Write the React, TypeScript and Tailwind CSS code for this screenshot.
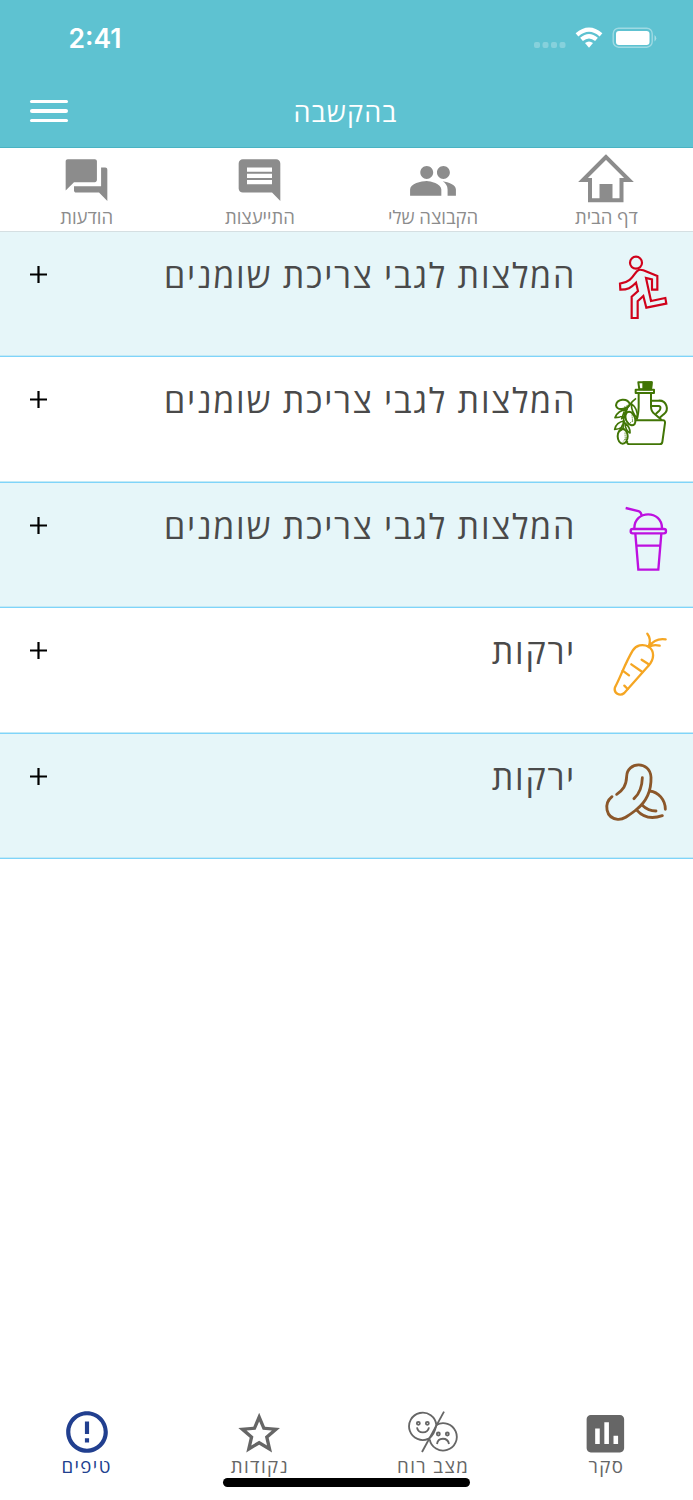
import React from "react";

const Runner = () => (
  <svg viewBox="30 30 210 210" className="w-[70px] h-[70px]" fill="none" stroke="#d0021b" strokeWidth="6.5">
    <circle cx="138" cy="68" r="18" />
    <path d="M146 90 C132 96 130 126 90 131 L91 149 C114 149 122 144 138 128 L144 153 L125 170 V234 H143 V184 L160 168 L169 203 L229 191 L226 174 L183 183 L168 114 L186 118 V149 H202 V108 L160 91 Q152 88 146 90Z" />
  </svg>
);

const OliveOil = () => (
  <svg viewBox="32 29 210 210" className="w-[70px] h-[70px]" fill="none" stroke="#417505" strokeWidth="6" strokeLinejoin="round">
    <path d="M147 51 H187 L185 72 H150Z" />
    <path d="M162 51 H187 L185 72 H162Z" fill="#417505" />
    <rect x="139" y="73" width="55" height="10" />
    <path d="M148 84 V126 Q147 150 142 163 M185 84 V124 Q185 138 196 146 L217 164" />
    <path d="M138 165 H221 Q228 165 227 173 L219 230 Q218 237 211 237 H119 Q111 235 114 227" />
    <path d="M187 106 H207 C232 104 241 134 223 147 L211 157 M187 122 H208 C216 123 214 132 209 137 L199 146" />
    <path d="M140 99 C108 124 101 154 101 192" strokeWidth="5" />
    <path d="M122 117 C114 96 82 100 80 120 C83 136 111 134 122 117Z" />
    <path d="M112 142 C126 132 144 156 136 176 C122 190 100 160 112 142Z" />
    <ellipse cx="100" cy="213" rx="15" ry="22" />
    <path d="M113 132 C95 133 83 142 77 157 C94 157 109 148 113 132Z M126 115 C141 126 145 142 144 158 C133 148 126 134 126 115Z M105 167 C89 169 79 178 76 192 C91 192 103 183 105 167Z M107 173 C117 181 123 191 122 203 C112 197 107 187 107 173Z M105 138 L97 160 L109 151 M100 178 L91 197 L105 188" strokeWidth="5" />
    <path d="M104 126 L116 119 M109 128 L119 121 M128 148 L130 172 M123 172 L132 164 M107 202 L108 226 M102 228 L111 217" strokeWidth="3" strokeDasharray="3 3" />
  </svg>
);

const Smoothie = () => (
  <svg viewBox="30 32 210 210" className="w-[70px] h-[70px]" fill="none" stroke="#bd10e0" strokeWidth="7">
    <path d="M107 53 L145 62 Q154 65 155 77 M133 115 C132 58 217 58 216 115" />
    <rect x="122" y="116" width="106" height="13" rx="6" />
    <path d="M136 130 L145 238 H205 L214 130 M139 166 H211" />
  </svg>
);

const Carrot = () => (
  <svg viewBox="30 33 210 210" className="w-[70px] h-[70px]" fill="none" stroke="#f5a623" strokeWidth="7" strokeLinecap="round">
    <path d="M176 95 C158 86 138 90 128 107 C105 145 91 188 75 217 C70 234 89 245 103 234 L174 154 C195 132 193 107 176 95Z" />
    <path d="M176 95 Q185 72 172 56 M176 95 Q196 68 227 73 M176 96 Q190 87 209 92 M155 134 L176 148 M124 148 L157 171 M98 167 L117 181 M103 212 L113 222" />
  </svg>
);

const Peanut = () => (
  <svg viewBox="30 34 210 210" className="w-[70px] h-[70px]" fill="none" stroke="#8b572a" strokeWidth="8.5" strokeLinecap="round">
    <path d="M66 168 C40 189 47 232 83 236 C101 238 121 221 139 207 C171 182 184 145 183 110 C181 60 111 62 110 107 C109 135 99 148 80 161" />
    <path d="M157 111 Q156 152 132 174 M179 151 C205 154 226 177 226 206 M156 193 Q174 211 198 211 M141 209 C162 233 187 235 217 225" />
  </svg>
);

const topTabs = [
  {
    label: "דף הבית",
    icon: (
      <svg viewBox="0 0 56 50" className="w-[56px] h-[50px]">
        <path d="M28 3 L5 26 H12 V46.200 H43.500 V26 H51 Z" fill="none" stroke="#8c8c8c" strokeWidth="4" />
        <path d="M21.500 30 H34.500 V47 H21.500Z" fill="#8c8c8c" />
      </svg>
    ),
  },
  {
    label: "הקבוצה שלי",
    icon: (
      <svg viewBox="0 0 24 24" className="w-[50px] h-[50px]" fill="#8c8c8c">
        <path d="M16.670 13.130C18.040 14.060 19 15.320 19 17v3h4v-3c0-2.180-3.570-3.470-6.330-3.870z" />
        <path d="M9 12c1.700 0 3.100-1.400 3.100-3.100S10.700 5.800 9 5.800 5.900 7.200 5.900 8.900 7.300 12 9 12zM17 12c1.700 0 3.100-1.400 3.100-3.100S18.700 5.800 17 5.800s-3.100 1.400-3.100 3.100S15.300 12 17 12zM9 13c-2.670 0-8 1.340-8 4v3h15v-3c0-2.660-5.330-4-7-4z" />
      </svg>
    ),
  },
  {
    label: "התייעצות",
    icon: (
      <svg viewBox="0 -0.5 24 24" className="w-[51px] h-[50px]" fill="#8c8c8c">
        <path d="M21.990 4c0-1.100-.890-2-1.990-2H4c-1.100 0-2 .900-2 2v12c0 1.100.900 2 2 2h14l4 4-.010-18zM18 14H6v-2h12v2zm0-3H6V9h12v2zm0-3H6V6h12v2z" />
      </svg>
    ),
  },
  {
    label: "הודעות",
    icon: (
      <svg viewBox="0 -0.5 24 24" className="w-[51px] h-[50px]" fill="#8c8c8c">
        <path d="M21 6h-2v9H6v2c0 .550.450 1 1 1h11l4 4V7c0-.550-.450-1-1-1zm-4 6V3c0-.550-.450-1-1-1H3c-.550 0-1 .450-1 1v14l4-4h10c.550 0 1-.450 1-1z" />
      </svg>
    ),
  },
];

const tips = [
  { title: "המלצות לגבי צריכת שומנים", icon: <Runner /> },
  { title: "המלצות לגבי צריכת שומנים", icon: <OliveOil /> },
  { title: "המלצות לגבי צריכת שומנים", icon: <Smoothie /> },
  { title: "ירקות", icon: <Carrot /> },
  { title: "ירקות", icon: <Peanut /> },
];

const bottomTabs = [
  {
    label: "סקר",
    icon: (
      <svg viewBox="0.3 -0.8 24 24" className="w-[50px] h-[50px]" fill="#666">
        <path d="M19 3H5c-1.100 0-2 .900-2 2v14c0 1.100.900 2 2 2h14c1.100 0 2-.900 2-2V5c0-1.100-.900-2-2-2zM9.300 17H7.100v-7.500h2.200V17zm4.400 0h-2.200V6.500h2.200V17zm4.400 0h-2.200v-4h2.200v4z" />
      </svg>
    ),
  },
  {
    label: "מצב רוח",
    icon: (
      <svg viewBox="178 36 156 150" className="w-[52px] h-[50px]" fill="none" stroke="#666" strokeWidth="5.500">
        <path d="M289 50 L223 171" />
        <path d="M266 90 A41 41 0 1 0 243 131 Q260 120 266 90Z" />
        <path d="M266 90 A41 41 0 1 1 246 133" />
        <circle cx="212" cy="85" r="4.500" />
        <circle cx="239" cy="85" r="4.500" />
        <circle cx="272" cy="117" r="4.500" />
        <circle cx="299" cy="117" r="4.500" />
        <path d="M208 97 C211 117 240 117 244 97 M268 147 C271 126 300 126 304 147" />
      </svg>
    ),
  },
  {
    label: "נקודות",
    icon: (
      <svg viewBox="0.4 -0.8 24 24" className="w-[50px] h-[50px]" fill="#666">
        <path d="M22 9.240l-7.190-.620L12 2 9.190 8.630 2 9.240l5.460 4.730L5.820 21 12 17.270 18.180 21l-1.630-7.030L22 9.240zM12 15.400l-3.760 2.270 1-4.280-3.320-2.880 4.380-.380L12 6.100l1.710 4.040 4.380.380-3.320 2.880 1 4.280L12 15.400z" />
      </svg>
    ),
  },
  {
    label: "טיפים",
    active: true,
    icon: (
      <svg viewBox="0 0 24 24" className="w-[50px] h-[50px]" fill="#213f8f">
        <path d="M11 15h2v2h-2zm0-8h2v6h-2zm.990-5C6.470 2 2 6.480 2 12s4.470 10 9.990 10C17.520 22 22 17.520 22 12S17.520 2 11.990 2zM12 20c-4.420 0-8-3.580-8-8s3.580-8 8-8 8 3.580 8 8-3.580 8-8 8z" />
      </svg>
    ),
  },
];

const StatusBar = () => (
  <div dir="ltr" className="flex h-[76px] items-center justify-between pl-[68.5px] pr-[36px]">
    <span className="font-[Inter,sans-serif] text-[26.5px] leading-none font-semibold text-white">2:41</span>
    <svg viewBox="0 0 123 24" className="w-[123px] h-[24px]" fill="white">
      <g opacity="0.25">
        <rect x="0" y="16" width="6" height="6" rx="2" />
        <rect x="8.500" y="16" width="6" height="6" rx="2" />
        <rect x="17" y="16" width="6" height="6" rx="2" />
        <rect x="25.500" y="16" width="6" height="6" rx="2" />
      </g>
      <g fill="none" stroke="white" strokeWidth="4.200">
        <path d="M43 8.800 Q55 -1.600 67 8.800" />
        <path d="M47.500 13.400 Q55 7 62.500 13.400" />
      </g>
      <path d="M51 17 Q55 14 59 17 L55 21.800Z" />
      <rect x="79.200" y="2.200" width="39" height="19" rx="5.500" fill="none" stroke="white" strokeOpacity="0.400" strokeWidth="1.400" />
      <rect x="82" y="5" width="33.500" height="14" rx="3" />
      <path d="M120.500 9 Q124 12 120.500 15.500Z" opacity="0.450" />
    </svg>
  </div>
);

const App = () => {
  return (
    <div
      dir="rtl"
      className="flex h-[1500px] w-[693px] flex-col overflow-hidden bg-white font-['Open_Sans','Noto_Sans',sans-serif]"
    >
      {/* HEADER */}
      <header className="h-[148px] shrink-0 border-b border-[#49b3c3] bg-[#5ec2d1]">
        <StatusBar />
        <div dir="ltr" className="grid h-[70px] grid-cols-[1fr_auto_1fr] items-center pr-[32px] pl-[30px]">
          <button className="flex w-[38px] flex-col gap-[6px]" aria-label="menu">
            <span className="h-[3.5px] w-full rounded-full bg-white" />
            <span className="h-[3.5px] w-full rounded-full bg-white" />
            <span className="h-[3.5px] w-full rounded-full bg-white" />
          </button>
          <h1 className="pt-[2px] text-[27px] tracking-[1.1px] text-white">בהקשבה</h1>
        </div>
      </header>

      {/* TOP TABS */}
      <nav className="grid h-[84px] shrink-0 grid-cols-4 border-b border-[#d5dfe2] text-[#8c8c8c]">
        {topTabs.map((tab) => (
          <a key={tab.label} className="flex flex-col items-center pt-[6px]">
            {tab.icon}
            <span className="text-[18.5px] leading-[26px]">{tab.label}</span>
          </a>
        ))}
      </nav>

      {/* TIPS LIST */}
      <main className="flex-1">
        {tips.map((tip, i) => (
          <div
            key={i}
            className="flex h-[125.4px] items-start border-b border-[#7fd4fa] pr-[23px] pl-[30px] shadow-[inset_0_-1px_#c3eaf6] odd:bg-[#e6f6f9]"
          >
            <div className="pt-[18px]">{tip.icon}</div>
            <h2 className="flex-1 pt-[18px] pr-[24px] text-[34px] leading-[50px] tracking-[1.72px] text-[#4a4a4a]">
              {tip.title}
            </h2>
            <svg viewBox="0 0 17 17" className="mt-[34px] h-[17px] w-[17px]" stroke="black" strokeWidth="2.2">
              <path d="M0 8.500H17M8.500 0V17" />
            </svg>
          </div>
        ))}
      </main>

      {/* BOTTOM TABS */}
      <nav className="grid shrink-0 grid-cols-4 text-[#666]">
        {bottomTabs.map((tab) => (
          <a key={tab.label} className={tab.active ? "flex flex-col items-center text-[#213f8f]" : "flex flex-col items-center"}>
            {tab.icon}
            <span className="mb-[4px] text-[18.7px] leading-[17px] tracking-[1.4px]">{tab.label}</span>
          </a>
        ))}
      </nav>
      <div className="mx-auto mb-[13px] h-[9px] w-[247px] shrink-0 rounded-full bg-black" />
    </div>
  );
};

export default App;
